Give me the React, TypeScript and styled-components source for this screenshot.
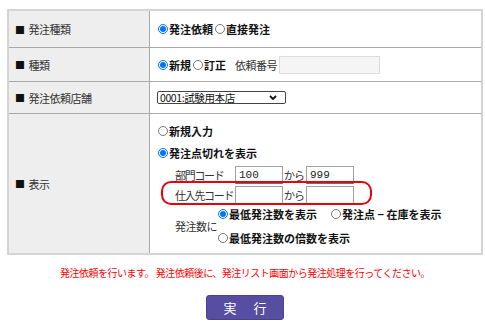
import React from "react";
import styled, { createGlobalStyle } from "styled-components";

const GlobalStyle = createGlobalStyle`
  body {
    margin: 0;
    background: #ffffff;
    font-family: "Noto Sans CJK JP", "Noto Sans", sans-serif;
    color: #222222;
  }
`;

const Page = styled.div`
  width: 476px;
  padding: 9px 0 0 7px;
`;

const FormTable = styled.div`
  box-sizing: border-box;
  width: 476px;
  display: grid;
  grid-template-columns: 141px 1fr;
  grid-template-rows: 37px 34px 32px 139px;
  border: 2px solid #d4d4d4;
`;

const LabelCell = styled.div<{ $last?: boolean }>`
  box-sizing: border-box;
  display: flex;
  align-items: center;
  padding-left: 6px;
  background: #eeeeee;
  border-right: 1px solid #a8a8a8;
  border-bottom: ${(p) => (p.$last ? "none" : "1px solid #a8a8a8")};
  font-size: 11px;
  letter-spacing: -0.5px;
  color: #333333;
`;

const Square = styled.span`
  font-size: 10px;
  color: #111111;
  margin-right: 4px;
`;

const ValueCell = styled.div<{ $last?: boolean }>`
  box-sizing: border-box;
  display: flex;
  align-items: center;
  padding-left: 8px;
  border-bottom: ${(p) => (p.$last ? "none" : "1px solid #a8a8a8")};
  font-size: 11px;
`;

const StackCell = styled(ValueCell)`
  flex-direction: column;
  align-items: flex-start;
  padding-top: 9px;
`;

const Radio = styled.input.attrs({ type: "radio" })`
  width: 10px;
  height: 10px;
  margin: 0 1px 0 0;
`;

const Choice = styled.label<{ $gap?: number }>`
  display: inline-flex;
  align-items: center;
  font-weight: bold;
  font-size: 11px;
  color: #111111;
  margin-right: ${(p) => p.$gap ?? 2}px;
  white-space: nowrap;
`;

const Plain = styled.span<{ $w?: number; $tight?: boolean }>`
  font-size: 11px;
  letter-spacing: ${(p) => (p.$tight ? "-1.3px" : "-0.5px")};
  color: #333333;
  white-space: nowrap;
  width: ${(p) => (p.$w ? `${p.$w}px` : "auto")};
  flex-shrink: 0;
`;

const TextBox = styled.input<{ $w: number; $muted?: boolean }>`
  box-sizing: border-box;
  width: ${(p) => p.$w}px;
  height: 18px;
  margin: 0;
  padding: 0 3px;
  border: 1px solid ${(p) => (p.$muted ? "#dddddd" : "#a0a0a0")};
  border-bottom-color: ${(p) => (p.$muted ? "#dddddd" : "#6e6e6e")};
  background: ${(p) => (p.$muted ? "#f5f5f5" : "#ffffff")};
  font-family: "Liberation Mono", monospace;
  font-size: 11px;
  color: #222222;
  outline: none;
`;

const SelectBox = styled.div`
  box-sizing: border-box;
  position: relative;
  width: 129px;
  height: 13px;
  margin-left: -1px;
  border: 1px solid #444444;
  border-radius: 2px;
  display: flex;
  align-items: center;
  padding-left: 2px;
  font-size: 10.5px;
  line-height: 11px;
  letter-spacing: -0.4px;
  color: #111111;
`;

const Chevron = styled.svg`
  position: absolute;
  right: 8px;
  top: 3px;
`;

const Line = styled.div<{ $mt?: number }>`
  display: flex;
  align-items: center;
  height: 16px;
  margin-top: ${(p) => p.$mt ?? 0}px;
`;

const CodeRow = styled.div<{ $mt: number }>`
  position: relative;
  display: flex;
  align-items: center;
  height: 18px;
  margin-top: ${(p) => p.$mt}px;
  padding-left: 17px;
`;

const Kara = styled.span`
  font-size: 11px;
  letter-spacing: -1px;
  color: #333333;
  margin: 0 2px 0 1px;
`;

const Highlight = styled.div`
  position: absolute;
  left: 3px;
  top: -5px;
  width: 211px;
  height: 24px;
  box-sizing: border-box;
  border: 2px solid #e8000b;
  border-radius: 10px;
  pointer-events: none;
`;

const QtyGroup = styled.div`
  display: flex;
  align-items: center;
  margin-top: 2px;
  padding-left: 17px;
`;

const QtyOptions = styled.div`
  display: flex;
  flex-direction: column;
  gap: 8px;
`;

const Footer = styled.div`
  display: flex;
  flex-direction: column;
  align-items: center;
  padding-top: 11px;
`;

const Notice = styled.p`
  margin: 0;
  height: 14px;
  line-height: 14px;
  font-size: 10px;
  letter-spacing: -0.5px;
  color: #ff0000;
`;

const RunButton = styled.button`
  box-sizing: border-box;
  margin-top: 15px;
  width: 78px;
  height: 25px;
  border: 1px solid #4a4290;
  border-radius: 3px;
  background: #574ea1;
  color: #ffffff;
  font-family: "Noto Sans CJK JP", sans-serif;
  font-size: 13px;
  letter-spacing: 2px;
  padding: 0 0 0 2px;
`;

const App: React.FC = () => {
  return (
    <Page>
      <GlobalStyle />
      <FormTable>
        <LabelCell>
          <Square>■</Square>発注種類
        </LabelCell>
        <ValueCell>
          <Choice>
            <Radio name="kind" defaultChecked />
            発注依頼
          </Choice>
          <Choice>
            <Radio name="kind" />
            直接発注
          </Choice>
        </ValueCell>

        <LabelCell>
          <Square>■</Square>種類
        </LabelCell>
        <ValueCell>
          <Choice>
            <Radio name="type" defaultChecked />
            新規
          </Choice>
          <Choice $gap={9}>
            <Radio name="type" />
            訂正
          </Choice>
          <Plain>依頼番号</Plain>
          <TextBox $w={101} $muted style={{ marginLeft: 2 }} readOnly />
        </ValueCell>

        <LabelCell>
          <Square>■</Square>発注依頼店舗
        </LabelCell>
        <ValueCell>
          <SelectBox>
            0001:試験用本店
            <Chevron width="8" height="5" viewBox="0 0 8 5">
              <polyline points="1,1 4,4 7,1" fill="none" stroke="#111" strokeWidth="1.8" />
            </Chevron>
          </SelectBox>
        </ValueCell>

        <LabelCell $last>
          <Square>■</Square>表示
        </LabelCell>
        <StackCell $last>
          <Line>
            <Choice>
              <Radio name="view" />
              新規入力
            </Choice>
          </Line>
          <Line $mt={6}>
            <Choice>
              <Radio name="view" defaultChecked />
              発注点切れを表示
            </Choice>
          </Line>
          <CodeRow $mt={5}>
            <Plain $w={60} $tight>部門コード</Plain>
            <TextBox $w={48} defaultValue="100" />
            <Kara>から</Kara>
            <TextBox $w={48} defaultValue="999" />
          </CodeRow>
          <CodeRow $mt={2}>
            <Plain $w={60} $tight>仕入先コード</Plain>
            <TextBox $w={48} />
            <Kara>から</Kara>
            <TextBox $w={48} />
            <Highlight />
          </CodeRow>
          <QtyGroup>
            <Plain $w={43}>発注数に</Plain>
            <QtyOptions>
              <Line>
                <Choice $gap={14}>
                  <Radio name="qty" defaultChecked />
                  最低発注数を表示
                </Choice>
                <Choice>
                  <Radio name="qty" />
                  発注点 − 在庫を表示
                </Choice>
              </Line>
              <Line>
                <Choice>
                  <Radio name="qty" />
                  最低発注数の倍数を表示
                </Choice>
              </Line>
            </QtyOptions>
          </QtyGroup>
        </StackCell>
      </FormTable>
      <Footer>
        <Notice>発注依頼を行います。 発注依頼後に、発注リスト画面から発注処理を行ってください。</Notice>
        <RunButton type="button">実　行</RunButton>
      </Footer>
    </Page>
  );
};

export default App;
